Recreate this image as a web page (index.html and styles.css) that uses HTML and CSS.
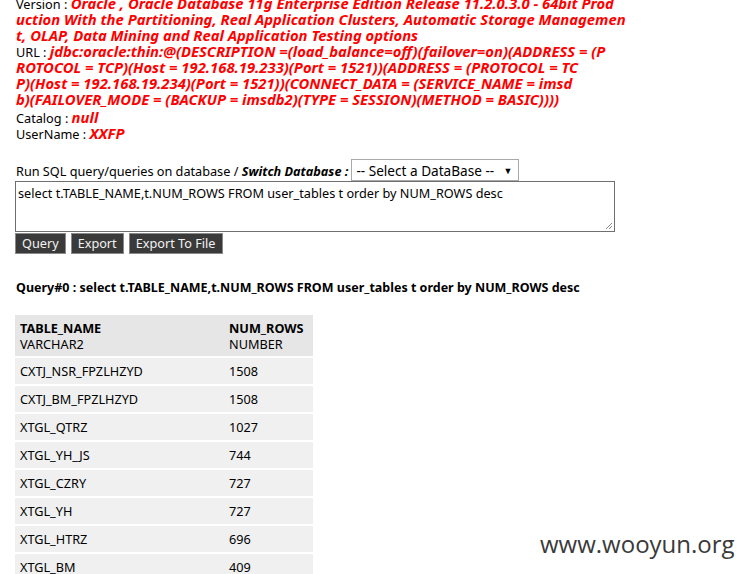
FILE: index.html
```html
<!DOCTYPE html>
<html>
<head>
<meta charset="utf-8">
<link rel="stylesheet" href="styles.css">
</head>
<body>
<div class="page">
  <div class="info">
    <div class="field">Version : <span class="val">Oracle , Oracle Database 11g Enterprise Edition Release 11.2.0.3.0 - 64bit Prod<br>uction With the Partitioning, Real Application Clusters, Automatic Storage Managemen<br>t, OLAP, Data Mining and Real Application Testing options</span></div>
    <div class="field">URL : <span class="val">jdbc:oracle:thin:@(DESCRIPTION =(load_balance=off)(failover=on)(ADDRESS = (P<br>ROTOCOL = TCP)(Host = 192.168.19.233)(Port = 1521))(ADDRESS = (PROTOCOL = TC<br>P)(Host = 192.168.19.234)(Port = 1521))(CONNECT_DATA = (SERVICE_NAME = imsd<br>b)(FAILOVER_MODE = (BACKUP = imsdb2)(TYPE = SESSION)(METHOD = BASIC))))</span></div>
    <div class="field gap">Catalog : <span class="val">null</span></div>
    <div class="field">UserName : <span class="val">XXFP</span></div>
  </div>

  <form class="sqlform">
    <div class="runline">
      <span>Run SQL query/queries on database / <b class="sw">Switch Database :</b></span>
      <div class="select">-- Select a DataBase --<span class="arrow">&#9660;</span></div>
    </div>
    <div class="textarea">select t.TABLE_NAME,t.NUM_ROWS FROM user_tables t order by NUM_ROWS desc
      <svg class="grip" width="9" height="9" viewBox="0 0 9 9"><path d="M8 2 L2 8 M8 5 L5 8" stroke="#888" stroke-width="1"/></svg>
    </div>
    <div class="buttons">
      <span class="btn">Query</span>
      <span class="btn">Export</span>
      <span class="btn">Export To File</span>
    </div>
  </form>

  <div class="qtitle">Query#0 : select t.TABLE_NAME,t.NUM_ROWS FROM user_tables t order by NUM_ROWS desc</div>

  <table class="result">
    <colgroup><col class="col1"><col class="col2"></colgroup>
    <thead>
      <tr><th><b>TABLE_NAME</b><br>VARCHAR2</th><th><b>NUM_ROWS</b><br>NUMBER</th></tr>
    </thead>
    <tbody>
      <tr><td>CXTJ_NSR_FPZLHZYD</td><td>1508</td></tr>
      <tr><td>CXTJ_BM_FPZLHZYD</td><td>1508</td></tr>
      <tr><td>XTGL_QTRZ</td><td>1027</td></tr>
      <tr><td>XTGL_YH_JS</td><td>744</td></tr>
      <tr><td>XTGL_CZRY</td><td>727</td></tr>
      <tr><td>XTGL_YH</td><td>727</td></tr>
      <tr><td>XTGL_HTRZ</td><td>696</td></tr>
      <tr><td>XTGL_BM</td><td>409</td></tr>
    </tbody>
  </table>
</div>
<div class="watermark">www.wooyun.org</div>
</body>
</html>
```
FILE: styles.css
```css
html, body {
  margin: 0;
  padding: 0;
  background: #fff;
  overflow: hidden;
  height: 574px;
}
body {
  font-family: "Noto Sans", "Open Sans", sans-serif;
  font-size: 12.7px;
  color: #000;
}
.page {
  padding: 0 15px;
  margin-top: -4px;
}
.info {
  padding-left: 1px;
}
.field {
  line-height: 16px;
  white-space: nowrap;
}
.field.gap {
  margin-top: 2px;
}
.val {
  color: #ff0000;
  font-weight: bold;
  font-style: italic;
  font-size: 14.8px;
  line-height: 12px;
}
.sqlform {
  margin-top: 17px;
}
.runline {
  display: flex;
  align-items: flex-end;
  height: 22px;
}
.runline > span {
  padding-left: 1px;
  line-height: 16px;
  padding-bottom: 2px;
}
.sw {
  font-style: italic;
}
.select {
  margin-left: 3px;
  box-sizing: border-box;
  width: 168px;
  height: 22px;
  border: 1px solid #a9a9a9;
  padding: 0 6px 0 4px;
  display: flex;
  align-items: center;
  justify-content: space-between;
  font-size: 13.6px;
}
.arrow {
  font-size: 9px;
}
.textarea {
  position: relative;
  box-sizing: border-box;
  width: 600px;
  height: 51px;
  border: 1px solid #6f6f6f;
  padding: 3px 2px;
  line-height: 16px;
}
.grip {
  position: absolute;
  right: 1px;
  bottom: 1px;
}
.buttons {
  display: flex;
  gap: 5px;
  margin-top: 1px;
}
.btn {
  box-sizing: border-box;
  height: 21px;
  background: #3a3a3a;
  color: #f2f2f2;
  border: 1px solid #8a8a8a;
  padding: 0 6px;
  line-height: 19px;
}
.qtitle {
  margin-top: 26px;
  font-weight: bold;
  font-size: 12.5px;
  line-height: 16px;
  padding-left: 1px;
}
.result {
  margin-top: 19px;
  border-collapse: collapse;
  width: 298px;
  table-layout: fixed;
}
.col1 {
  width: 209px;
}
.result th {
  background: #e6e6e6;
  text-align: left;
  font-weight: normal;
  line-height: 16px;
  padding: 5px 5px 4px;
  vertical-align: top;
}
.result td {
  background: #f0f0f0;
  border-top: 2px solid #fff;
  height: 26px;
  padding: 0 5px;
  line-height: 16px;
}
.watermark {
  position: absolute;
  left: 540px;
  top: 527px;
  font-family: "Open Sans", "Noto Sans", sans-serif;
  font-size: 24px;
  color: #3a3a3a;
}
```
